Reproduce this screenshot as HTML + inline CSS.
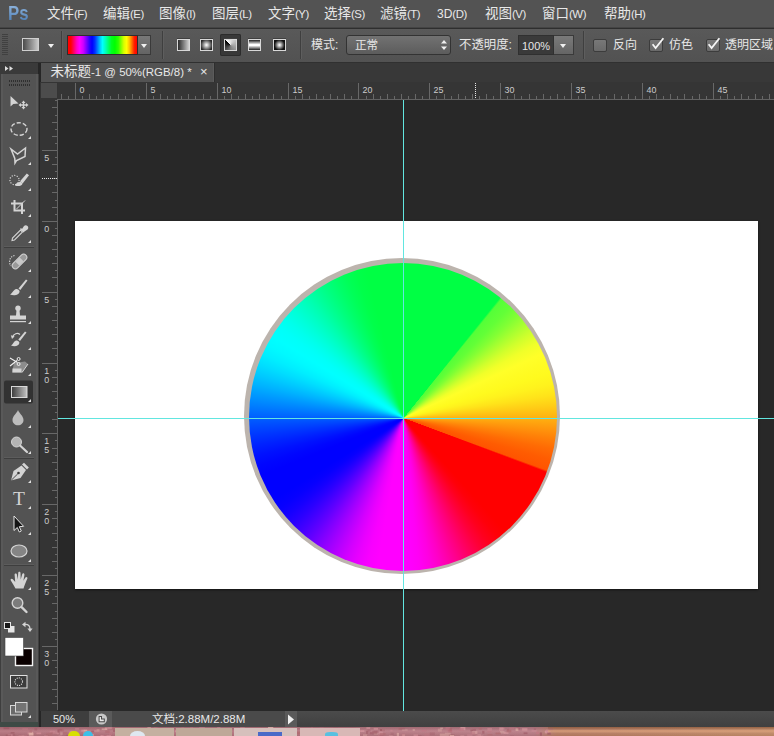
<!DOCTYPE html>
<html lang="zh-CN">
<head>
<meta charset="utf-8">
<title>未标题-1 @ 50%(RGB/8)</title>
<style>
html,body{margin:0;padding:0;}
body{width:774px;height:736px;overflow:hidden;background:#282828;position:relative;
 font-family:"Liberation Sans","Noto Sans CJK SC",sans-serif;color:#dcdcdc;}
.abs{position:absolute;}
#menubar{left:0;top:0;width:774px;height:27px;background:#535353;}
#menubar .mi{position:absolute;top:0;height:27px;line-height:27px;font-size:13.5px;color:#e8e8e8;white-space:nowrap;}
#menubar .l{font-size:11.4px;letter-spacing:-0.45px;position:relative;top:0px;}
#menubar .l3{font-size:12px;}
#pslogo{position:absolute;left:8px;top:0px;height:27px;line-height:25px;font-size:21px;font-weight:bold;color:#6f9ac6;background:linear-gradient(180deg,#8db3dc 20%,#4d7db4 80%);-webkit-background-clip:text;background-clip:text;-webkit-text-fill-color:transparent;letter-spacing:0;transform:scaleX(0.8);transform-origin:0 0;font-family:"Liberation Sans",sans-serif;}
#menuline{left:0;top:27px;width:774px;height:2px;background:linear-gradient(180deg,#444 0,#444 50%,#2e2e2e 50%,#2e2e2e 100%);}
#optbar{left:0;top:29px;width:774px;height:33px;background:linear-gradient(180deg,#595959,#525252);box-sizing:border-box;}
#optline{left:0;top:62px;width:774px;height:1px;background:#303030;}
.olabel{position:absolute;font-size:12px;color:#e6e6e6;white-space:nowrap;line-height:16px;}
#toolhead{left:0;top:63px;width:38px;height:11px;background:#3a3a3a;}
#toolbar{left:0;top:74px;width:38px;height:653px;background:#535353;}
#toolgap{left:38px;top:63px;width:3px;height:664px;background:#262626;}
#tabbar{left:41px;top:63px;width:733px;height:19px;background:#383838;}
#tab{left:41px;top:63px;width:172px;height:19px;background:#535353;box-shadow:1px 0 0 #5c5c5c, 2px 0 0 #2e2e2e;}
#tab span{position:absolute;left:9.5px;top:0;line-height:18px;font-size:13.5px;color:#e8e8e8;white-space:nowrap;}
#tab span i{font-style:normal;font-size:11.45px;}
#tabx{position:absolute;left:159px;top:0;line-height:18px;font-size:13px;color:#e8e8e8;}
#hruler{left:41px;top:82px;width:733px;height:18px;background:#353535;}
#vruler{left:40px;top:82px;width:18px;height:629px;background:#343434;}
#rcorner{left:41px;top:83px;width:16px;height:15px;background:#4c4c4c;}
#work{left:58px;top:100px;width:716px;height:610px;background:#282828;overflow:hidden;}
#doc{left:75px;top:221px;width:683.4px;height:368px;background:#fff;box-shadow:0 1px 2px rgba(0,0,0,.55);}
#ring{left:243.6px;top:258.2px;width:316.4px;height:316.2px;border-radius:50%;background:#bcb4ad;}
#disc{left:248.8px;top:263.4px;width:308px;height:308px;border-radius:50%;
 background:conic-gradient(from 0deg at 154.7px 155.1px,#00ff44 0.0deg,#00ff44 38.6deg,#54ff38 39.4deg,#63ff37 43.7deg,#82ff34 47.9deg,#aaff30 52.2deg,#d1ff2c 56.5deg,#f0ff29 60.7deg,#ffff28 65.0deg,#fffc23 69.0deg,#fffa1e 73.0deg,#fff21d 77.1deg,#ffe31a 81.2deg,#ffcd16 85.3deg,#ffb411 89.4deg,#ff9a0d 93.6deg,#ff8108 97.7deg,#ff6b04 101.8deg,#ff5c01 105.9deg,#ff5400 110.0deg,#ff0000 110.8deg,#ff0000 138.0deg,#ff000a 142.0deg,#ff001e 146.0deg,#ff003a 150.0deg,#ff005c 154.0deg,#ff0080 158.0deg,#ff00a3 162.0deg,#ff00c5 166.0deg,#ff00e1 170.0deg,#ff00f5 174.0deg,#ff00ff 178.0deg,#ff00ff 190.0deg,#f800ff 194.0deg,#e900ff 198.0deg,#d400ff 202.0deg,#ba00ff 206.0deg,#9e00ff 210.0deg,#8000ff 214.0deg,#6100ff 218.0deg,#4500ff 222.0deg,#2b00ff 226.0deg,#1600ff 230.0deg,#0700ff 234.0deg,#0000ff 238.0deg,#0000ff 248.0deg,#0006ff 251.9deg,#0011ff 255.7deg,#0022ff 259.6deg,#0036ff 263.4deg,#004dff 267.3deg,#0066ff 271.1deg,#0080ff 275.0deg,#0099ff 278.9deg,#00b2ff 282.7deg,#00c9ff 286.6deg,#00ddff 290.4deg,#00eeff 294.3deg,#00f9ff 298.1deg,#00ffff 302.0deg,#00fff9 306.0deg,#00ffec 310.0deg,#00ffda 314.0deg,#00ffc5 318.0deg,#00ffae 322.0deg,#00ff95 326.0deg,#00ff7e 330.0deg,#00ff69 334.0deg,#00ff57 338.0deg,#00ff4a 342.0deg,#00ff44 346.0deg,#00ff44 360.0deg);}
#vguide{left:403px;top:100px;width:1px;height:611px;background:#62e6e0;}
#hguide{left:58px;top:418px;width:716px;height:1px;background:#62e6e0;}
#status{left:41px;top:711px;width:733px;height:16px;background:linear-gradient(180deg,#4b4b4b,#404040);}
#statusl{left:41px;top:711px;width:256px;height:16px;background:#4a4a4a;}
#bottomline{left:0;top:722px;width:38px;height:5px;background:#3e4a45;}
#bottom{left:0;top:727px;width:774px;height:9px;background:linear-gradient(180deg,rgba(0,0,0,.12) 0,rgba(255,255,255,.08) 45%,rgba(0,0,0,.06) 100%),linear-gradient(90deg,#b4727c 0,#b87a84 69%,#b87c62 72%,#c48c68 100%);}

#grip1{left:2px;top:34px;width:6px;height:22px;background:repeating-linear-gradient(180deg,#3e3e3e 0,#3e3e3e 1px,transparent 1px,transparent 2px);opacity:.9;}
.vsep{position:absolute;top:31px;width:1px;height:28px;background:#3f3f3f;box-shadow:1px 0 0 #5e5e5e;}
#preset{left:22px;top:38px;width:17px;height:13px;box-sizing:border-box;border:1px solid #cfcfcf;background:linear-gradient(90deg,#4a4a4a,#c8c8c8);}
.tri{position:absolute;width:0;height:0;border-left:3.5px solid transparent;border-right:3.5px solid transparent;border-top:4px solid #f0f0f0;}
#gpick{left:67px;top:35px;width:71px;height:20px;box-sizing:border-box;border:1px solid #2e2e2e;
 background:linear-gradient(90deg,#ff0000 0%,#ff0000 4%,#ff00c8 13%,#ff00ff 17%,#d000ff 22%,#2000ff 32%,#0000ff 35%,#0030ff 39%,#00d0ff 47%,#00ffff 50%,#00ffc0 54%,#00ff20 63%,#00ff00 68%,#30ff00 73%,#d8ff00 81%,#ffff00 85%,#ffc000 89%,#ff2000 96%,#ff0000 100%);}
#gdrop{left:138px;top:35px;width:13px;height:20px;box-sizing:border-box;border:1px solid #3a3a3a;border-left:none;background:linear-gradient(180deg,#787878,#646464);}
.gi{position:absolute;top:39px;width:13px;height:12px;box-sizing:border-box;border:1px solid #d8d8d8;box-shadow:0 -1px 0 #404040;}
#gsel{left:220px;top:34px;width:21px;height:22px;background:#383838;border-radius:2px;box-shadow:inset 0 0 0 1px #2c2c2c;}
#modedd{left:346px;top:35px;width:105px;height:20px;box-sizing:border-box;border:1px solid #333;border-radius:3px;background:linear-gradient(180deg,#727272,#5c5c5c);}
#opin{left:518px;top:35px;width:36px;height:20px;box-sizing:border-box;border:1px solid #303030;background:#3a3a3a;}
#opdd{left:554px;top:35px;width:20px;height:20px;box-sizing:border-box;border:1px solid #3a3a3a;border-left:none;background:linear-gradient(180deg,#7a7a7a,#656565);}
.cb{position:absolute;top:39px;width:14px;height:13px;box-sizing:border-box;border:1px solid #3c3c3c;border-radius:2px;background:linear-gradient(180deg,#787878,#6a6a6a);}
</style>
</head>
<body>
<div id="menubar" class="abs">
 <div id="pslogo">Ps</div>
 <div class="mi" style="left:47px"><span class="c">文件</span><span class="l">(F)</span></div>
 <div class="mi" style="left:103px"><span class="c">编辑</span><span class="l">(E)</span></div>
 <div class="mi" style="left:159px"><span class="c">图像</span><span class="l">(I)</span></div>
 <div class="mi" style="left:212px"><span class="c">图层</span><span class="l">(L)</span></div>
 <div class="mi" style="left:268px"><span class="c">文字</span><span class="l">(Y)</span></div>
 <div class="mi" style="left:324px"><span class="c">选择</span><span class="l">(S)</span></div>
 <div class="mi" style="left:380px"><span class="c">滤镜</span><span class="l">(T)</span></div>
 <div class="mi" style="left:437px"><span class="l3">3D</span><span class="l">(D)</span></div>
 <div class="mi" style="left:485px"><span class="c">视图</span><span class="l">(V)</span></div>
 <div class="mi" style="left:542px"><span class="c">窗口</span><span class="l">(W)</span></div>
 <div class="mi" style="left:604px"><span class="c">帮助</span><span class="l">(H)</span></div>
</div>
<div id="menuline" class="abs"></div>
<div id="optbar" class="abs"></div>
<div id="grip1" class="abs"></div>
<div id="preset" class="abs"></div>
<div class="tri" style="left:48px;top:44px"></div>
<div class="vsep" style="left:61px"></div>
<div id="gpick" class="abs"></div>
<div id="gdrop" class="abs"></div>
<div class="tri" style="left:140.5px;top:44px"></div>
<div class="vsep" style="left:162px"></div>
<div id="gsel" class="abs"></div>
<div class="gi" style="left:177px;background:linear-gradient(90deg,#2a2a2a,#d0d0d0)"></div>
<div class="gi" style="left:200px;background:radial-gradient(circle at 50% 50%,#ffffff 0,#dcdcdc 15%,#2a2a2a 80%)"></div>
<div class="gi" style="left:224px;background:conic-gradient(from 315deg at 50% 50%,#ffffff 0deg,#b8b8b8 110deg,#808080 220deg,#000 360deg)"></div>
<div class="gi" style="left:248px;background:linear-gradient(180deg,#1c1c1c 0,#ffffff 45%,#ffffff 55%,#1c1c1c 100%)"></div>
<div class="gi" style="left:273px;background:radial-gradient(circle at 50% 50%,#ffffff 0,#e0e0e0 12%,#101010 70%)"></div>
<div class="vsep" style="left:300px"></div>
<div class="olabel" style="left:311px;top:37px">模式:</div>
<div id="modedd" class="abs"></div>
<div class="olabel" style="left:355px;top:37px;font-size:11.6px">正常</div>
<svg class="abs" style="left:440px;top:39px" width="8" height="12" viewBox="0 0 8 12"><path d="M1 4.5 L4 1 L7 4.5Z M1 7.5 L4 11 L7 7.5Z" fill="#f0f0f0"/></svg>
<div class="olabel" style="left:459px;top:37px;font-size:12.4px">不透明度:</div>
<div id="opin" class="abs"></div>
<div class="olabel" style="left:522px;top:37.5px;font-size:11px">100%</div>
<div id="opdd" class="abs"></div>
<div class="tri" style="left:560px;top:44px"></div>
<div class="vsep" style="left:583px"></div>
<div class="cb" style="left:593px"></div>
<div class="olabel" style="left:613px;top:37px">反向</div>
<div class="cb" style="left:649px"></div>
<svg class="abs" style="left:651px;top:34px" width="16" height="18" viewBox="0 0 16 18"><path d="M1.6 10.3 L4.6 14 L12.4 4.2" fill="none" stroke="#f6f6f6" stroke-width="1.8"/></svg>
<div class="olabel" style="left:669px;top:37px">仿色</div>
<div class="cb" style="left:705.5px"></div>
<svg class="abs" style="left:707px;top:34px" width="16" height="18" viewBox="0 0 16 18"><path d="M1.6 10.3 L4.6 14 L12.4 4.2" fill="none" stroke="#f6f6f6" stroke-width="1.8"/></svg>
<div class="olabel" style="left:725px;top:37px">透明区域</div>
<div id="optline" class="abs"></div>
<div id="toolhead" class="abs"></div>
<div id="toolbar" class="abs"></div>
<div id="toolgap" class="abs"></div>
<div id="tabbar" class="abs"></div>
<div id="tab" class="abs"><span>未标题<i>-1 @ 50%(RGB/8) *</i></span><b id="tabx" style="font-weight:normal">×</b></div>
<div id="hruler" class="abs"></div>
<div id="vruler" class="abs"></div>
<div id="rcorner" class="abs"></div>
<div id="work" class="abs"></div>
<div id="doc" class="abs"></div>
<div id="ring" class="abs"></div>
<div id="disc" class="abs"></div>
<div id="vguide" class="abs"></div>
<div id="hguide" class="abs"></div>
<div id="status" class="abs"></div>
<div id="statusl" class="abs"></div>
<!--TOOLS-->
<svg id="tools" class="abs" style="left:0;top:63px" width="41" height="664" viewBox="0 63 41 664">
<rect x="0" y="74" width="1" height="653" fill="#3e3e3e"/><rect x="1" y="74" width="2" height="653" fill="#595959"/><rect x="36" y="74" width="2.5" height="653" fill="#595959"/>
<path d="M5 66 L8.5 68.5 L5 71Z M9.5 66 L13 68.5 L9.5 71Z" fill="#dedede"/>
<g stroke="#2f2f2f" stroke-width="1"><path d="M9.5 80 v2 M9.5 84 v2"/><path d="M11.5 80 v2 M11.5 84 v2"/><path d="M13.5 80 v2 M13.5 84 v2"/><path d="M15.5 80 v2 M15.5 84 v2"/><path d="M17.5 80 v2 M17.5 84 v2"/><path d="M19.5 80 v2 M19.5 84 v2"/><path d="M21.5 80 v2 M21.5 84 v2"/><path d="M23.5 80 v2 M23.5 84 v2"/><path d="M25.5 80 v2 M25.5 84 v2"/><path d="M27.5 80 v2 M27.5 84 v2"/><path d="M29.5 80 v2 M29.5 84 v2"/></g>
<rect x="4" y="247" width="30" height="1" fill="#3e3e3e"/><rect x="4" y="246" width="30" height="1" fill="#5c5c5c"/>
<rect x="4" y="458" width="30" height="1" fill="#3e3e3e"/><rect x="4" y="457" width="30" height="1" fill="#5c5c5c"/>
<rect x="4" y="565" width="30" height="1" fill="#3e3e3e"/><rect x="4" y="564" width="30" height="1" fill="#5c5c5c"/>
<path d="M10.5 96 L10.5 106.5 L13.3 104 L18.5 103.5Z" fill="#d4d4d4"/>
<path d="M23.5 100.5 L25.5 103 L24.2 103 L24.2 104.3 L26 104.3 L26 103 L28.5 105 L26 107 L26 105.7 L24.2 105.7 L24.2 107 L25.5 107 L23.5 109.5 L21.5 107 L22.8 107 L22.8 105.7 L21 105.7 L21 107 L18.5 105 L21 103 L21 104.3 L22.8 104.3 L22.8 103 L21.5 103Z" fill="#d4d4d4"/>
<ellipse cx="19" cy="129" rx="8" ry="6.3" fill="none" stroke="#d4d4d4" stroke-width="1.4" stroke-dasharray="4.2 2"/>
<path d="M31 136 L31 139 L28 139Z" fill="#e0e0e0"/>
<path d="M11 149 L17.5 154 L25.5 148 L25 156.5 L16.5 160.5 L15 163 L14.8 158.5Z" fill="none" stroke="#d4d4d4" stroke-width="1.5" stroke-linejoin="miter"/>
<path d="M31 162 L31 165 L28 165Z" fill="#e0e0e0"/>
<circle cx="14.5" cy="180" r="4.6" fill="none" stroke="#d4d4d4" stroke-width="1.2" stroke-dasharray="1.2 1.4"/>
<path d="M29 175.2 L26.8 173.4 L20 181.3 L22.6 183.4Z" fill="#d4d4d4"/><path d="M15 185.5 C16 182.5 19 181.5 21 182 L22.5 183.5 C22 186 18 186.8 15 185.5Z" fill="#d4d4d4"/>
<path d="M31 188 L31 191 L28 191Z" fill="#e0e0e0"/>
<path d="M14.5 200 V210.5 H25 M11 203.5 H22 V214" fill="none" stroke="#d4d4d4" stroke-width="2"/><path d="M16.5 209 L25 200.5" stroke="#d4d4d4" stroke-width="1"/>
<path d="M31 214 L31 217 L28 217Z" fill="#e0e0e0"/>
<path d="M12 240.5 L12.5 238 L20.5 230 L22.5 232 L14.5 240Z" fill="none" stroke="#d4d4d4" stroke-width="1.1"/><path d="M20 229 L23.5 232.5 L24.5 231.5 L27.5 229.5 C28.5 228.5 28.5 227 27.5 226 C26.5 225 25 225 24 226 L22 229 L21 228Z" fill="#d4d4d4"/>
<path d="M31 240 L31 243 L28 243Z" fill="#e0e0e0"/>
<g transform="rotate(-45 19.5 261.5)"><rect x="10.5" y="258.3" width="18" height="6.4" rx="3.2" fill="#9a9a9a" stroke="#d4d4d4" stroke-width="1"/><rect x="16.5" y="258.8" width="6" height="5.4" fill="#c8c8c8"/></g>
<path d="M14.5 255.5 C10 256.5 8.5 261 10.5 266" fill="none" stroke="#d4d4d4" stroke-width="1.2" stroke-dasharray="1.2 1.3"/>
<path d="M31 269 L31 272 L28 272Z" fill="#e0e0e0"/>
<path d="M27.5 280.5 L26 279.5 L18.5 288.5 L20.3 290Z" fill="#d4d4d4"/><path d="M10 294.5 C12.5 293.5 13 290 16 289 C17.5 288.6 19.5 290 19.6 291.5 C19.5 295 14 296.3 10 294.5Z" fill="#d4d4d4"/>
<path d="M31 295 L31 298 L28 298Z" fill="#e0e0e0"/>
<circle cx="18" cy="308.3" r="2.7" fill="#d4d4d4"/><path d="M16.5 310 H19.5 L20 315.5 H26 V319.5 H10 V315.5 H16Z" fill="#d4d4d4"/><rect x="10" y="321" width="16" height="1.2" fill="#d4d4d4"/>
<path d="M31 321 L31 324 L28 324Z" fill="#e0e0e0"/>
<path d="M26.5 332.5 L25 331.5 L18.3 339.5 L20 341Z" fill="#d4d4d4"/><path d="M11 345.5 C13 344.5 13.5 341.5 16 340.5 C17.5 340 19.3 341.3 19.4 342.8 C19.3 346 14.5 347.2 11 345.5Z" fill="#d4d4d4"/><path d="M12.5 337.5 C13.5 333.5 17.5 332.5 20 334.5" fill="none" stroke="#d4d4d4" stroke-width="1.3"/><path d="M10.8 335.2 L14.6 336.2 L12 339Z" fill="#d4d4d4"/>
<path d="M31 347 L31 350 L28 350Z" fill="#e0e0e0"/>
<path d="M14 363 L25 361.5 L28 364 L22 372.5 L12 372.5Z" fill="#8c8c8c"/><path d="M12.5 368.5 H21.5 V372.5 H12.5Z" fill="#d4d4d4"/><path d="M22 372.5 L28 364" stroke="#d4d4d4" stroke-width="1"/>
<path d="M10 358 L17.5 362.5 M10 366 L17 360.5" stroke="#f0f0f0" stroke-width="1.2" fill="none"/><circle cx="18.6" cy="359" r="1.5" fill="none" stroke="#f0f0f0" stroke-width="1"/><circle cx="18.6" cy="364" r="1.5" fill="none" stroke="#f0f0f0" stroke-width="1"/>
<path d="M31 373 L31 376 L28 376Z" fill="#e0e0e0"/>
<rect x="4" y="380.5" width="29" height="23" rx="2" fill="#323232"/>
<defs><linearGradient id="gt" x1="0" y1="0" x2="1" y2="0"><stop offset="0" stop-color="#3a3a3a"/><stop offset="1" stop-color="#c4c4c4"/></linearGradient></defs>
<rect x="11.5" y="386.5" width="15.5" height="11" fill="url(#gt)" stroke="#d8d8d8" stroke-width="1"/>
<path d="M31 399 L31 402 L28 402Z" fill="#e0e0e0"/>
<path d="M18 410 C19 413 23.5 416 23.5 420 C23.5 423.2 21 425.3 18 425.3 C15 425.3 12.5 423.2 12.5 420 C12.5 416 17 413 18 410Z" fill="#bdbdbd"/>
<path d="M31 425 L31 428 L28 428Z" fill="#e0e0e0"/>
<circle cx="16.5" cy="442" r="5" fill="#b4b4b4" stroke="#d4d4d4" stroke-width="1"/><path d="M20.3 445.8 L27 452" stroke="#d4d4d4" stroke-width="2.2" stroke-linecap="round"/>
<path d="M31 451 L31 454 L28 454Z" fill="#e0e0e0"/>
<path d="M11 480.5 L13.5 471 L21.5 465.5 L26 470 L20.5 478Z" fill="#d4d4d4"/><path d="M22 464.5 L24 462.8 L28.8 467.5 L27 469.5Z" fill="#d4d4d4"/><circle cx="18.5" cy="473" r="1.3" fill="#3a3a3a"/><path d="M11.3 480.2 L17.8 473.8" stroke="#3a3a3a" stroke-width="0.9"/>
<path d="M31 480 L31 483 L28 483Z" fill="#e0e0e0"/>
<text x="19" y="505" text-anchor="middle" font-family="Liberation Serif,serif" font-size="19.5" fill="#d4d4d4">T</text>
<path d="M31 506 L31 509 L28 509Z" fill="#e0e0e0"/>
<path d="M14 516 L14 530.5 L17.3 527.5 L19.3 532 L21.3 531 L19.3 526.7 L23.6 526.3Z" fill="#141414" stroke="#e4e4e4" stroke-width="1"/>
<path d="M31 532 L31 535 L28 535Z" fill="#e0e0e0"/>
<ellipse cx="19" cy="551" rx="8" ry="6" fill="#858585" stroke="#d4d4d4" stroke-width="1.2"/>
<path d="M31 559 L31 562 L28 562Z" fill="#e0e0e0"/>
<path d="M15.5 588.5 C14 586 12.5 583 10.8 580.5 C10 579 11.6 578 12.8 579.2 L15.2 582 L14.6 574.8 C14.5 573.2 16.6 573 16.9 574.6 L17.8 579.5 L18.2 573 C18.3 571.4 20.5 571.5 20.5 573.1 L20.7 579.6 L22.2 574.2 C22.7 572.7 24.7 573.3 24.4 574.9 L23.4 580.8 L25.4 577.5 C26.2 576.2 28 577.2 27.3 578.7 C26 581.5 24.5 585 23.5 588.5Z" fill="#d4d4d4"/>
<path d="M31 587 L31 590 L28 590Z" fill="#e0e0e0"/>
<circle cx="17.5" cy="603" r="5.3" fill="#7c7c7c" stroke="#d4d4d4" stroke-width="1.4"/><path d="M21.6 607.2 L26.5 612" stroke="#d4d4d4" stroke-width="2.4" stroke-linecap="round"/>
<rect x="8" y="626" width="6.5" height="6.5" fill="#e6e6e6"/><rect x="4.5" y="622.5" width="6" height="6" fill="#1a1a1a" stroke="#e6e6e6" stroke-width="1"/>
<path d="M24.5 624.5 C28.5 624 30 626 30 629" fill="none" stroke="#d4d4d4" stroke-width="1.3"/><path d="M22 624.5 L25.5 621.8 L25.5 627.2Z M30 632 L27.4 628.5 L32.6 628.5Z" fill="#d4d4d4"/>
<rect x="15.5" y="648.5" width="17" height="17" fill="#0a0000" stroke="#f4f4f4" stroke-width="1.4"/>
<rect x="5" y="637.5" width="18.5" height="18.5" fill="#ffffff" stroke="#444" stroke-width="0.6"/>
<rect x="10.5" y="675.5" width="16.5" height="12.5" fill="#3c3c3c" stroke="#e0e0e0" stroke-width="1"/><circle cx="18.7" cy="681.7" r="3.8" fill="none" stroke="#e8e8e8" stroke-width="1.1" stroke-dasharray="1 1.2"/>
<rect x="10.5" y="705.5" width="11" height="9.5" fill="#6a6a6a" stroke="#d8d8d8" stroke-width="1"/><rect x="15.5" y="702.5" width="11.5" height="9.5" fill="#747474" stroke="#d8d8d8" stroke-width="1"/>
<path d="M31 715 L31 718 L28 718Z" fill="#e0e0e0"/>
</svg>
<!--/TOOLS-->
<!--RULERS-->
<svg id="rulers" class="abs" style="left:41px;top:82px" width="733" height="628" viewBox="41 82 733 628" font-family="Liberation Sans,sans-serif" font-size="8.9" fill="#cccccc">
<path d="M61.5 94V99 M68.5 96V99 M75.5 83V99 M82.5 96V99 M89.5 94V99 M96.5 96V99 M103.5 94V99 M110.5 96V99 M118.5 94V99 M125.5 96V99 M132.5 94V99 M139.5 96V99 M146.5 83V99 M153.5 96V99 M160.5 94V99 M167.5 96V99 M174.5 94V99 M181.5 96V99 M188.5 94V99 M195.5 96V99 M203.5 94V99 M210.5 96V99 M217.5 83V99 M224.5 96V99 M231.5 94V99 M238.5 96V99 M245.5 94V99 M252.5 96V99 M259.5 94V99 M266.5 96V99 M273.5 94V99 M281.5 96V99 M288.5 83V99 M295.5 96V99 M302.5 94V99 M309.5 96V99 M316.5 94V99 M323.5 96V99 M330.5 94V99 M337.5 96V99 M344.5 94V99 M351.5 96V99 M358.5 83V99 M366.5 96V99 M373.5 94V99 M380.5 96V99 M387.5 94V99 M394.5 96V99 M401.5 94V99 M408.5 96V99 M415.5 94V99 M422.5 96V99 M429.5 83V99 M436.5 96V99 M444.5 94V99 M451.5 96V99 M458.5 94V99 M465.5 96V99 M472.5 94V99 M479.5 96V99 M486.5 94V99 M493.5 96V99 M500.5 83V99 M507.5 96V99 M514.5 94V99 M521.5 96V99 M529.5 94V99 M536.5 96V99 M543.5 94V99 M550.5 96V99 M557.5 94V99 M564.5 96V99 M571.5 83V99 M578.5 96V99 M585.5 94V99 M592.5 96V99 M599.5 94V99 M606.5 96V99 M614.5 94V99 M621.5 96V99 M628.5 94V99 M635.5 96V99 M642.5 83V99 M649.5 96V99 M656.5 94V99 M663.5 96V99 M670.5 94V99 M677.5 96V99 M684.5 94V99 M692.5 96V99 M699.5 94V99 M706.5 96V99 M713.5 83V99 M720.5 96V99 M727.5 94V99 M734.5 96V99 M741.5 94V99 M748.5 96V99 M755.5 94V99 M762.5 96V99 M769.5 94V99" stroke="#686868" stroke-width="1" fill="none"/>
<text x="79.5" y="93.2">0</text>
<text x="150.5" y="93.2">5</text>
<text x="221.5" y="93.2">10</text>
<text x="292.5" y="93.2">15</text>
<text x="362.5" y="93.2">20</text>
<text x="433.5" y="93.2">25</text>
<text x="504.5" y="93.2">30</text>
<text x="575.5" y="93.2">35</text>
<text x="646.5" y="93.2">40</text>
<text x="717.5" y="93.2">45</text>
<path d="M55 100.5H58 M52 107.5H58 M55 115.5H58 M52 122.5H58 M55 129.5H58 M52 136.5H58 M55 143.5H58 M42 150.5H58 M55 157.5H58 M52 164.5H58 M55 171.5H58 M52 178.5H58 M55 185.5H58 M52 192.5H58 M55 200.5H58 M52 207.5H58 M55 214.5H58 M42 221.5H58 M55 228.5H58 M52 235.5H58 M55 242.5H58 M52 249.5H58 M55 256.5H58 M52 263.5H58 M55 270.5H58 M52 277.5H58 M55 285.5H58 M42 292.5H58 M55 299.5H58 M52 306.5H58 M55 313.5H58 M52 320.5H58 M55 327.5H58 M52 334.5H58 M55 341.5H58 M52 348.5H58 M55 355.5H58 M42 363.5H58 M55 370.5H58 M52 377.5H58 M55 384.5H58 M52 391.5H58 M55 398.5H58 M52 405.5H58 M55 412.5H58 M52 419.5H58 M55 426.5H58 M42 433.5H58 M55 440.5H58 M52 448.5H58 M55 455.5H58 M52 462.5H58 M55 469.5H58 M52 476.5H58 M55 483.5H58 M52 490.5H58 M55 497.5H58 M42 504.5H58 M55 511.5H58 M52 518.5H58 M55 526.5H58 M52 533.5H58 M55 540.5H58 M52 547.5H58 M55 554.5H58 M52 561.5H58 M55 568.5H58 M42 575.5H58 M55 582.5H58 M52 589.5H58 M55 596.5H58 M52 603.5H58 M55 611.5H58 M52 618.5H58 M55 625.5H58 M52 632.5H58 M55 639.5H58 M42 646.5H58 M55 653.5H58 M52 660.5H58 M55 667.5H58 M52 674.5H58 M55 681.5H58 M52 689.5H58 M55 696.5H58 M52 703.5H58" stroke="#686868" stroke-width="1" fill="none"/>
<text x="44.3" y="160.5">5</text>
<text x="44.3" y="231.5">0</text>
<text x="44.3" y="302.5">5</text>
<text x="44.3" y="373.5">1</text>
<text x="44.3" y="382.5">0</text>
<text x="44.3" y="443.5">1</text>
<text x="44.3" y="452.5">5</text>
<text x="44.3" y="514.5">2</text>
<text x="44.3" y="523.5">0</text>
<text x="44.3" y="585.5">2</text>
<text x="44.3" y="594.5">5</text>
<text x="44.3" y="656.5">3</text>
<text x="44.3" y="665.5">0</text>
<path d="M58 99.5H774 M57.5 99V710" stroke="#626262" stroke-width="1" fill="none"/>
<path d="M475.5 83V99" stroke="#e8e8e8" stroke-width="1" stroke-dasharray="1 1" fill="none"/>
<path d="M42 178.5H58" stroke="#e8e8e8" stroke-width="1" stroke-dasharray="1 1" fill="none"/>
</svg>
<!--/RULERS-->
<!--STATUS-->
<div id="st1" class="abs" style="left:41px;top:711px;width:48px;height:16px;background:#3e3e3e"></div>
<div class="abs st" style="left:53px;top:711px;line-height:16px;font-size:11px;color:#e8e8e8">50%</div>
<div id="st2" class="abs" style="left:89px;top:711px;width:23px;height:16px;background:#5a5a5a"></div>
<svg class="abs" style="left:95px;top:712px" width="13" height="14" viewBox="0 0 13 14"><circle cx="6.5" cy="7" r="5.6" fill="#c8c8c8"/><path d="M3.6 4 H7 V6.6 H9.8 V10.3 H3.6Z" fill="#4a4a4a"/><path d="M4.6 5 H6 V7.6 H8.8 V9.3 H4.6Z" fill="#e8e8e8"/></svg>
<div id="st3" class="abs" style="left:112px;top:711px;width:173px;height:16px;background:#4a4a4a"></div>
<div class="abs st" style="left:152px;top:711px;line-height:16px;font-size:11.5px;color:#e8e8e8;white-space:nowrap">文档:2.88M/2.88M</div>
<div id="st4" class="abs" style="left:285px;top:711px;width:12px;height:16px;background:#5a5a5a"></div>
<svg class="abs" style="left:287px;top:714px" width="8" height="11" viewBox="0 0 8 11"><path d="M1 0.5 L7 5.5 L1 10.5Z" fill="#f0f0f0"/></svg>

<!--/STATUS-->
<div id="bottomline" class="abs"></div>
<div id="bottom" class="abs"></div>
<svg class="abs" style="left:0;top:727px" width="774" height="9" viewBox="0 0 774 9"><rect x="177.5" y="1.4" width="4.6" height="1.6" fill="#e0b0a8" opacity="0.39"/><rect x="319.4" y="8.2" width="2.9" height="1.7" fill="#a4606c" opacity="0.38"/><rect x="49.7" y="3.8" width="5.3" height="1.7" fill="#cf8c96" opacity="0.63"/><rect x="319.5" y="0.6" width="4.3" height="1.6" fill="#cf8c96" opacity="0.37"/><rect x="470.4" y="2.6" width="2.6" height="1.7" fill="#9c5862" opacity="0.60"/><rect x="373.7" y="0.9" width="4.3" height="1.9" fill="#d89aa0" opacity="0.60"/><rect x="34.4" y="0.5" width="2.8" height="2.9" fill="#a4606c" opacity="0.70"/><rect x="255.1" y="8.3" width="3.4" height="2.0" fill="#cf8c96" opacity="0.66"/><rect x="133.8" y="5.2" width="4.1" height="3.3" fill="#c07884" opacity="0.55"/><rect x="333.7" y="0.7" width="4.0" height="1.8" fill="#9c5862" opacity="0.42"/><rect x="268.0" y="0.4" width="4.7" height="3.0" fill="#e0b0a8" opacity="0.71"/><rect x="448.5" y="3.1" width="3.4" height="2.5" fill="#b06a70" opacity="0.56"/><rect x="460.3" y="8.5" width="3.9" height="2.8" fill="#d89aa0" opacity="0.68"/><rect x="169.7" y="5.2" width="4.7" height="2.4" fill="#c07884" opacity="0.52"/><rect x="366.4" y="0.2" width="3.8" height="1.8" fill="#d89aa0" opacity="0.57"/><rect x="119.6" y="2.6" width="5.0" height="2.3" fill="#b06a70" opacity="0.57"/><rect x="91.2" y="3.6" width="3.1" height="1.8" fill="#a4606c" opacity="0.74"/><rect x="152.6" y="3.7" width="3.4" height="3.3" fill="#cf8c96" opacity="0.42"/><rect x="96.6" y="2.1" width="2.9" height="2.5" fill="#e0b0a8" opacity="0.43"/><rect x="154.5" y="1.3" width="4.1" height="2.7" fill="#9c5862" opacity="0.78"/><rect x="378.4" y="4.6" width="4.5" height="2.9" fill="#d89aa0" opacity="0.56"/><rect x="477.3" y="8.6" width="4.7" height="2.6" fill="#a4606c" opacity="0.53"/><rect x="56.7" y="5.7" width="2.2" height="1.6" fill="#cf8c96" opacity="0.55"/><rect x="60.2" y="5.4" width="2.4" height="2.6" fill="#e0b0a8" opacity="0.40"/><rect x="199.3" y="0.2" width="5.5" height="2.7" fill="#cf8c96" opacity="0.64"/><rect x="523.6" y="5.4" width="3.9" height="1.7" fill="#a4606c" opacity="0.80"/><rect x="255.4" y="4.4" width="2.3" height="1.7" fill="#9c5862" opacity="0.68"/><rect x="262.3" y="6.2" width="4.1" height="1.9" fill="#e0b0a8" opacity="0.51"/><rect x="378.2" y="8.2" width="5.0" height="2.1" fill="#c07884" opacity="0.74"/><rect x="381.5" y="2.4" width="3.5" height="1.8" fill="#b06a70" opacity="0.45"/><rect x="296.8" y="4.5" width="4.5" height="2.7" fill="#b06a70" opacity="0.79"/><rect x="467.2" y="7.3" width="5.3" height="3.0" fill="#cf8c96" opacity="0.44"/><rect x="270.0" y="6.6" width="6.0" height="3.1" fill="#a4606c" opacity="0.47"/><rect x="379.5" y="8.6" width="3.8" height="3.4" fill="#9c5862" opacity="0.78"/><rect x="199.8" y="2.0" width="2.9" height="1.9" fill="#cf8c96" opacity="0.57"/><rect x="539.9" y="5.5" width="2.0" height="3.3" fill="#9c5862" opacity="0.71"/><rect x="46.5" y="5.9" width="5.6" height="3.1" fill="#b06a70" opacity="0.44"/><rect x="487.2" y="3.9" width="4.5" height="1.7" fill="#c07884" opacity="0.53"/><rect x="220.0" y="8.5" width="4.9" height="1.8" fill="#cf8c96" opacity="0.36"/><rect x="323.8" y="4.2" width="4.6" height="2.7" fill="#e0b0a8" opacity="0.79"/><rect x="360.2" y="3.2" width="4.2" height="1.8" fill="#d89aa0" opacity="0.71"/><rect x="398.1" y="0.9" width="5.0" height="1.8" fill="#b06a70" opacity="0.44"/><rect x="478.9" y="0.3" width="2.9" height="2.5" fill="#b06a70" opacity="0.61"/><rect x="142.1" y="3.8" width="2.5" height="3.3" fill="#9c5862" opacity="0.75"/><rect x="363.0" y="7.3" width="4.1" height="3.2" fill="#e0b0a8" opacity="0.41"/><rect x="83.2" y="4.6" width="5.5" height="3.1" fill="#e0b0a8" opacity="0.35"/><rect x="437.9" y="1.6" width="3.9" height="3.0" fill="#e0b0a8" opacity="0.38"/><rect x="373.9" y="4.8" width="3.9" height="3.1" fill="#e0b0a8" opacity="0.38"/><rect x="104.8" y="0.4" width="2.4" height="2.4" fill="#d89aa0" opacity="0.69"/><rect x="500.0" y="4.0" width="4.5" height="2.5" fill="#e0b0a8" opacity="0.44"/><rect x="151.9" y="4.6" width="5.2" height="2.5" fill="#cf8c96" opacity="0.66"/><rect x="480.3" y="8.5" width="3.0" height="2.6" fill="#cf8c96" opacity="0.73"/><rect x="75.1" y="1.1" width="3.8" height="1.6" fill="#cf8c96" opacity="0.54"/><rect x="116.6" y="2.7" width="2.5" height="3.1" fill="#c07884" opacity="0.64"/><rect x="200.7" y="2.3" width="2.5" height="2.4" fill="#c07884" opacity="0.78"/><rect x="218.2" y="4.4" width="6.0" height="3.2" fill="#cf8c96" opacity="0.67"/><rect x="544.8" y="3.6" width="3.7" height="2.2" fill="#d89aa0" opacity="0.67"/><rect x="10.7" y="5.0" width="3.8" height="1.5" fill="#9c5862" opacity="0.58"/><rect x="161.9" y="8.6" width="2.5" height="3.3" fill="#cf8c96" opacity="0.79"/><rect x="57.4" y="2.4" width="2.2" height="3.1" fill="#9c5862" opacity="0.69"/><rect x="449.2" y="7.6" width="4.7" height="3.4" fill="#a4606c" opacity="0.42"/><rect x="503.7" y="5.1" width="4.8" height="1.7" fill="#d89aa0" opacity="0.71"/><rect x="100.5" y="8.1" width="3.1" height="1.5" fill="#d89aa0" opacity="0.71"/><rect x="45.9" y="7.7" width="2.3" height="3.2" fill="#a4606c" opacity="0.36"/><rect x="544.9" y="3.8" width="5.7" height="2.7" fill="#d89aa0" opacity="0.59"/><rect x="130.7" y="1.0" width="2.6" height="1.6" fill="#cf8c96" opacity="0.77"/><rect x="344.5" y="4.8" width="2.8" height="2.4" fill="#c07884" opacity="0.43"/><rect x="190.2" y="0.2" width="3.0" height="1.5" fill="#c07884" opacity="0.58"/><rect x="536.0" y="4.6" width="3.0" height="2.4" fill="#c07884" opacity="0.72"/><rect x="236.8" y="4.5" width="5.3" height="2.3" fill="#e0b0a8" opacity="0.49"/><rect x="117.9" y="2.1" width="2.8" height="3.3" fill="#c07884" opacity="0.64"/><rect x="221.8" y="3.1" width="2.2" height="1.8" fill="#d89aa0" opacity="0.63"/><rect x="482.2" y="3.9" width="2.2" height="2.8" fill="#a4606c" opacity="0.74"/><rect x="367.5" y="2.5" width="3.0" height="2.1" fill="#a4606c" opacity="0.43"/><rect x="147.4" y="0.0" width="3.5" height="2.2" fill="#e0b0a8" opacity="0.50"/><rect x="18.9" y="7.9" width="2.9" height="1.9" fill="#9c5862" opacity="0.52"/><rect x="260.1" y="4.5" width="2.8" height="2.5" fill="#d89aa0" opacity="0.39"/><rect x="447.7" y="1.3" width="4.3" height="2.3" fill="#9c5862" opacity="0.49"/><rect x="127.6" y="5.3" width="4.1" height="3.0" fill="#c07884" opacity="0.75"/><rect x="429.7" y="5.4" width="5.1" height="2.9" fill="#a4606c" opacity="0.42"/><rect x="396.8" y="5.8" width="2.2" height="3.2" fill="#e0b0a8" opacity="0.63"/><rect x="402.2" y="7.3" width="2.6" height="2.5" fill="#e0b0a8" opacity="0.61"/><rect x="445.5" y="0.1" width="4.7" height="3.1" fill="#c07884" opacity="0.66"/><rect x="379.9" y="2.1" width="2.1" height="1.8" fill="#9c5862" opacity="0.78"/><rect x="206.4" y="4.1" width="2.2" height="1.5" fill="#e0b0a8" opacity="0.66"/><rect x="268.1" y="0.0" width="5.2" height="3.0" fill="#e0b0a8" opacity="0.75"/><rect x="50.4" y="4.7" width="5.0" height="2.4" fill="#b06a70" opacity="0.38"/><rect x="145.5" y="6.6" width="2.8" height="3.0" fill="#a4606c" opacity="0.57"/><rect x="209.6" y="4.3" width="4.7" height="3.0" fill="#e0b0a8" opacity="0.63"/><rect x="108.7" y="5.4" width="3.3" height="2.8" fill="#c07884" opacity="0.49"/><rect x="311.1" y="0.1" width="2.2" height="2.0" fill="#c07884" opacity="0.39"/><rect x="119.3" y="4.4" width="4.8" height="2.1" fill="#a4606c" opacity="0.56"/><rect x="64.9" y="8.0" width="2.8" height="3.5" fill="#a4606c" opacity="0.36"/><rect x="251.5" y="7.4" width="5.9" height="2.4" fill="#9c5862" opacity="0.52"/><rect x="502.3" y="8.4" width="2.3" height="1.7" fill="#c07884" opacity="0.59"/><rect x="522.1" y="1.2" width="5.3" height="2.5" fill="#d89aa0" opacity="0.67"/><rect x="126.8" y="8.1" width="3.9" height="1.5" fill="#d89aa0" opacity="0.78"/><rect x="373.5" y="3.6" width="4.9" height="2.3" fill="#a4606c" opacity="0.49"/><rect x="460.4" y="0.0" width="5.0" height="3.2" fill="#d89aa0" opacity="0.77"/><rect x="107.3" y="0.1" width="5.0" height="2.0" fill="#d89aa0" opacity="0.53"/><rect x="547.3" y="5.3" width="3.4" height="2.4" fill="#9c5862" opacity="0.73"/><rect x="153.8" y="0.5" width="4.6" height="2.8" fill="#cf8c96" opacity="0.46"/><rect x="145.6" y="4.6" width="2.8" height="2.2" fill="#a4606c" opacity="0.75"/><rect x="445.0" y="5.7" width="5.7" height="3.4" fill="#e0b0a8" opacity="0.44"/><rect x="44.2" y="8.4" width="3.6" height="2.7" fill="#cf8c96" opacity="0.64"/><rect x="156.8" y="0.4" width="5.7" height="1.8" fill="#a4606c" opacity="0.54"/><rect x="154.4" y="2.3" width="5.0" height="2.8" fill="#a4606c" opacity="0.65"/><rect x="164.9" y="5.0" width="3.6" height="1.8" fill="#cf8c96" opacity="0.38"/><rect x="274.3" y="7.3" width="4.2" height="2.4" fill="#9c5862" opacity="0.80"/><rect x="246.6" y="1.3" width="2.8" height="1.7" fill="#9c5862" opacity="0.60"/><rect x="175.0" y="3.3" width="5.2" height="1.9" fill="#d89aa0" opacity="0.69"/><rect x="226.2" y="3.7" width="4.1" height="2.3" fill="#9c5862" opacity="0.69"/><rect x="273.0" y="5.2" width="3.4" height="2.9" fill="#e0b0a8" opacity="0.63"/><rect x="472.8" y="1.9" width="3.1" height="2.0" fill="#a4606c" opacity="0.64"/><rect x="236.6" y="2.8" width="5.3" height="3.4" fill="#cf8c96" opacity="0.36"/><rect x="388.8" y="8.1" width="3.9" height="2.7" fill="#d89aa0" opacity="0.38"/><rect x="509.8" y="8.4" width="4.1" height="2.4" fill="#a4606c" opacity="0.46"/><rect x="59.8" y="1.4" width="4.1" height="2.9" fill="#b06a70" opacity="0.67"/><rect x="354.7" y="6.9" width="3.8" height="2.6" fill="#d89aa0" opacity="0.35"/><rect x="68.9" y="5.1" width="2.2" height="2.9" fill="#cf8c96" opacity="0.63"/><rect x="289.5" y="3.9" width="5.1" height="1.7" fill="#9c5862" opacity="0.59"/><rect x="319.4" y="3.5" width="2.9" height="2.7" fill="#d89aa0" opacity="0.59"/><rect x="546.0" y="2.5" width="3.3" height="3.2" fill="#cf8c96" opacity="0.56"/><rect x="128.7" y="2.2" width="5.8" height="2.9" fill="#9c5862" opacity="0.37"/><rect x="106.4" y="8.0" width="4.6" height="1.7" fill="#cf8c96" opacity="0.65"/><rect x="507.0" y="2.0" width="2.1" height="2.2" fill="#a4606c" opacity="0.51"/><rect x="217.2" y="0.1" width="3.2" height="3.2" fill="#d89aa0" opacity="0.44"/><rect x="531.5" y="2.8" width="5.3" height="2.0" fill="#cf8c96" opacity="0.47"/><rect x="487.4" y="1.0" width="4.5" height="2.7" fill="#cf8c96" opacity="0.57"/><rect x="498.9" y="0.5" width="4.4" height="3.3" fill="#d89aa0" opacity="0.45"/><rect x="533.8" y="1.3" width="2.2" height="1.6" fill="#a4606c" opacity="0.55"/><rect x="390.2" y="2.8" width="2.5" height="1.7" fill="#cf8c96" opacity="0.50"/><rect x="101.7" y="8.4" width="5.0" height="1.6" fill="#c07884" opacity="0.68"/><rect x="459.8" y="8.9" width="3.8" height="1.7" fill="#d89aa0" opacity="0.48"/><rect x="192.6" y="8.6" width="2.5" height="3.4" fill="#cf8c96" opacity="0.52"/><rect x="421.3" y="2.8" width="5.2" height="1.7" fill="#c07884" opacity="0.56"/><rect x="204.2" y="8.3" width="2.8" height="2.2" fill="#a4606c" opacity="0.36"/><rect x="225.1" y="7.3" width="5.1" height="1.6" fill="#d89aa0" opacity="0.56"/><rect x="440.2" y="0.6" width="2.8" height="1.6" fill="#e0b0a8" opacity="0.50"/><rect x="149.2" y="8.6" width="4.5" height="2.0" fill="#c07884" opacity="0.66"/><rect x="506.5" y="2.7" width="4.9" height="2.7" fill="#b06a70" opacity="0.64"/><rect x="516.9" y="0.2" width="2.9" height="2.5" fill="#a4606c" opacity="0.78"/><rect x="211.8" y="2.3" width="3.7" height="2.5" fill="#a4606c" opacity="0.43"/><rect x="439.8" y="6.6" width="5.3" height="3.0" fill="#e0b0a8" opacity="0.46"/><rect x="472.0" y="4.1" width="5.1" height="2.7" fill="#e0b0a8" opacity="0.44"/><rect x="412.6" y="2.2" width="2.3" height="1.6" fill="#e0b0a8" opacity="0.60"/><rect x="88.1" y="3.8" width="2.4" height="1.6" fill="#e0b0a8" opacity="0.39"/><rect x="52.8" y="4.5" width="4.8" height="2.4" fill="#cf8c96" opacity="0.41"/><rect x="252.6" y="8.0" width="2.9" height="2.6" fill="#b06a70" opacity="0.65"/><rect x="66.4" y="7.6" width="3.2" height="2.6" fill="#9c5862" opacity="0.46"/><rect x="142.7" y="4.0" width="2.7" height="2.0" fill="#9c5862" opacity="0.75"/><rect x="316.9" y="2.9" width="3.6" height="3.5" fill="#e0b0a8" opacity="0.59"/><rect x="356.0" y="0.9" width="3.9" height="1.6" fill="#d89aa0" opacity="0.56"/><rect x="448.9" y="7.6" width="5.7" height="1.6" fill="#9c5862" opacity="0.45"/><rect x="27.6" y="5.4" width="5.3" height="1.9" fill="#d89aa0" opacity="0.52"/><rect x="474.6" y="4.0" width="3.0" height="3.1" fill="#d89aa0" opacity="0.40"/><rect x="326.7" y="5.6" width="2.9" height="2.2" fill="#cf8c96" opacity="0.37"/><rect x="547.9" y="0.3" width="4.9" height="3.3" fill="#b06a70" opacity="0.36"/><rect x="179.3" y="6.1" width="2.7" height="2.1" fill="#cf8c96" opacity="0.36"/><rect x="271.6" y="4.4" width="3.6" height="3.1" fill="#c07884" opacity="0.60"/><rect x="350.3" y="0.8" width="2.7" height="2.9" fill="#a4606c" opacity="0.79"/><rect x="366.0" y="3.8" width="2.2" height="3.0" fill="#9c5862" opacity="0.54"/><rect x="10.0" y="6.9" width="5.2" height="2.8" fill="#a4606c" opacity="0.68"/><rect x="111.6" y="0.1" width="5.6" height="2.3" fill="#b06a70" opacity="0.39"/><rect x="316.6" y="3.3" width="5.1" height="1.8" fill="#d89aa0" opacity="0.60"/><rect x="351.1" y="8.2" width="2.4" height="2.7" fill="#9c5862" opacity="0.68"/><rect x="94.1" y="3.1" width="2.6" height="1.8" fill="#d89aa0" opacity="0.40"/><rect x="268.8" y="7.2" width="5.9" height="1.9" fill="#cf8c96" opacity="0.73"/><rect x="23.8" y="8.2" width="3.3" height="2.7" fill="#c07884" opacity="0.52"/><rect x="495.5" y="5.6" width="5.3" height="1.8" fill="#b06a70" opacity="0.74"/><rect x="340.3" y="5.5" width="2.8" height="2.4" fill="#e0b0a8" opacity="0.45"/><rect x="219.1" y="4.7" width="3.5" height="1.7" fill="#cf8c96" opacity="0.79"/><rect x="447.0" y="1.7" width="5.5" height="3.2" fill="#c07884" opacity="0.37"/><rect x="459.3" y="1.1" width="4.4" height="2.6" fill="#c07884" opacity="0.70"/><rect x="355.7" y="2.8" width="3.0" height="2.3" fill="#9c5862" opacity="0.55"/><rect x="240.2" y="0.2" width="4.5" height="2.5" fill="#cf8c96" opacity="0.55"/><rect x="339.0" y="7.4" width="5.3" height="3.1" fill="#a4606c" opacity="0.40"/><rect x="70.4" y="3.9" width="2.4" height="2.4" fill="#e0b0a8" opacity="0.65"/><rect x="22.3" y="1.2" width="5.7" height="2.1" fill="#c07884" opacity="0.58"/><rect x="29.7" y="4.5" width="3.5" height="3.4" fill="#cf8c96" opacity="0.36"/><rect x="36.4" y="5.5" width="4.8" height="1.7" fill="#cf8c96" opacity="0.79"/><rect x="269.5" y="8.6" width="5.7" height="1.8" fill="#b06a70" opacity="0.67"/><rect x="121.2" y="7.5" width="4.4" height="2.0" fill="#9c5862" opacity="0.75"/><rect x="150.7" y="7.3" width="2.6" height="2.5" fill="#a4606c" opacity="0.44"/><rect x="144.1" y="4.6" width="3.3" height="1.6" fill="#cf8c96" opacity="0.53"/><rect x="348.8" y="2.5" width="3.3" height="2.3" fill="#b06a70" opacity="0.70"/><rect x="63.1" y="4.8" width="4.5" height="2.2" fill="#b06a70" opacity="0.55"/><rect x="285.8" y="6.2" width="5.6" height="2.0" fill="#e0b0a8" opacity="0.63"/><rect x="216.1" y="7.2" width="3.1" height="3.5" fill="#e0b0a8" opacity="0.42"/><rect x="181.3" y="0.7" width="2.9" height="2.7" fill="#d89aa0" opacity="0.48"/><rect x="282.8" y="2.8" width="5.9" height="3.2" fill="#c07884" opacity="0.75"/><rect x="401.7" y="6.7" width="2.9" height="2.1" fill="#c07884" opacity="0.54"/><rect x="280.9" y="8.1" width="2.5" height="2.0" fill="#c07884" opacity="0.37"/><rect x="29.8" y="5.1" width="3.2" height="2.5" fill="#e0b0a8" opacity="0.45"/><rect x="319.8" y="5.3" width="2.8" height="2.7" fill="#a4606c" opacity="0.42"/><rect x="7.7" y="7.2" width="4.8" height="2.4" fill="#d89aa0" opacity="0.64"/><rect x="477.5" y="7.0" width="3.6" height="2.0" fill="#d89aa0" opacity="0.38"/><rect x="449.8" y="8.0" width="4.4" height="2.7" fill="#e0b0a8" opacity="0.77"/><rect x="402.0" y="2.2" width="5.6" height="1.6" fill="#e0b0a8" opacity="0.36"/><rect x="101.7" y="1.4" width="5.6" height="1.7" fill="#e0b0a8" opacity="0.60"/><rect x="515.6" y="1.3" width="2.8" height="2.7" fill="#e0b0a8" opacity="0.64"/><rect x="227.6" y="5.5" width="4.0" height="1.6" fill="#c07884" opacity="0.37"/><rect x="487.4" y="7.0" width="4.9" height="1.5" fill="#b06a70" opacity="0.55"/><rect x="499.9" y="0.7" width="4.6" height="1.9" fill="#d89aa0" opacity="0.47"/><rect x="352.9" y="1.1" width="5.6" height="3.4" fill="#b06a70" opacity="0.47"/><rect x="28.8" y="5.7" width="4.7" height="2.9" fill="#e0b0a8" opacity="0.79"/><rect x="162.0" y="8.4" width="5.6" height="1.7" fill="#e0b0a8" opacity="0.36"/><rect x="142.7" y="2.1" width="5.0" height="3.4" fill="#c07884" opacity="0.76"/><rect x="105.2" y="3.5" width="4.4" height="2.3" fill="#b06a70" opacity="0.63"/><rect x="379.7" y="6.0" width="5.9" height="2.4" fill="#b06a70" opacity="0.59"/><rect x="3.5" y="0.2" width="5.8" height="2.0" fill="#9c5862" opacity="0.71"/><rect x="214.6" y="5.3" width="4.3" height="1.8" fill="#d89aa0" opacity="0.36"/><rect x="58.5" y="8.4" width="3.4" height="1.8" fill="#d89aa0" opacity="0.36"/><rect x="75.8" y="5.8" width="2.2" height="1.6" fill="#d89aa0" opacity="0.38"/><rect x="323.6" y="3.3" width="5.3" height="3.1" fill="#c07884" opacity="0.38"/><rect x="475.6" y="8.2" width="5.8" height="1.7" fill="#cf8c96" opacity="0.44"/><rect x="18.6" y="8.5" width="5.6" height="3.0" fill="#d89aa0" opacity="0.72"/><rect x="346.1" y="2.6" width="2.4" height="1.7" fill="#b06a70" opacity="0.64"/><rect x="161.4" y="3.0" width="3.0" height="2.2" fill="#9c5862" opacity="0.37"/><rect x="416.4" y="8.2" width="5.1" height="2.7" fill="#a4606c" opacity="0.73"/><rect x="338.8" y="0.3" width="3.7" height="2.4" fill="#b06a70" opacity="0.39"/><rect x="257.0" y="0.4" width="4.3" height="2.9" fill="#b06a70" opacity="0.39"/><rect x="449.3" y="1.5" width="2.0" height="1.9" fill="#b06a70" opacity="0.69"/><rect x="29.6" y="3.1" width="2.4" height="2.9" fill="#b06a70" opacity="0.43"/><rect x="271.0" y="3.1" width="5.3" height="2.0" fill="#cf8c96" opacity="0.48"/><rect x="117.7" y="6.3" width="4.0" height="1.7" fill="#c07884" opacity="0.70"/><rect x="268.7" y="8.9" width="4.2" height="1.7" fill="#9c5862" opacity="0.51"/><rect x="219.9" y="3.6" width="5.6" height="1.7" fill="#c07884" opacity="0.36"/><rect x="113.0" y="2.4" width="5.6" height="2.5" fill="#a4606c" opacity="0.79"/><rect x="345.6" y="8.5" width="2.5" height="2.7" fill="#c07884" opacity="0.69"/><rect x="354.2" y="3.1" width="3.3" height="1.8" fill="#b06a70" opacity="0.55"/><rect x="303.4" y="2.9" width="3.9" height="2.9" fill="#9c5862" opacity="0.61"/><rect x="69.1" y="4.2" width="5.5" height="2.0" fill="#cf8c96" opacity="0.47"/><rect x="413.6" y="7.4" width="4.5" height="2.9" fill="#cf8c96" opacity="0.68"/><rect x="330.4" y="3.1" width="2.9" height="3.4" fill="#9c5862" opacity="0.79"/><rect x="399.3" y="0.9" width="5.8" height="1.7" fill="#a4606c" opacity="0.42"/><rect x="81.3" y="2.7" width="3.2" height="2.0" fill="#d89aa0" opacity="0.64"/><rect x="58.6" y="1.9" width="3.6" height="1.6" fill="#a4606c" opacity="0.73"/><rect x="239.2" y="2.0" width="5.9" height="2.1" fill="#d89aa0" opacity="0.41"/><rect x="330.8" y="3.6" width="5.0" height="3.3" fill="#a4606c" opacity="0.67"/><rect x="321.9" y="5.8" width="5.4" height="2.8" fill="#c07884" opacity="0.75"/><rect x="424.2" y="6.3" width="5.4" height="2.9" fill="#c07884" opacity="0.41"/><rect x="237.0" y="2.3" width="4.8" height="3.3" fill="#cf8c96" opacity="0.70"/><rect x="390.8" y="5.7" width="3.0" height="2.3" fill="#a4606c" opacity="0.36"/><rect x="470.5" y="4.7" width="4.6" height="3.2" fill="#c07884" opacity="0.50"/><rect x="5.8" y="7.5" width="5.6" height="1.7" fill="#9c5862" opacity="0.59"/><rect x="88.1" y="7.0" width="5.8" height="2.5" fill="#d89aa0" opacity="0.73"/><rect x="250.3" y="1.8" width="3.9" height="1.5" fill="#b06a70" opacity="0.72"/><rect x="285.9" y="3.7" width="5.8" height="1.9" fill="#c07884" opacity="0.43"/><rect x="281.6" y="8.4" width="4.9" height="2.7" fill="#c07884" opacity="0.38"/><rect x="150.3" y="3.6" width="2.1" height="2.3" fill="#a4606c" opacity="0.63"/><rect x="369.8" y="5.2" width="2.4" height="2.1" fill="#a4606c" opacity="0.77"/><rect x="288.8" y="2.0" width="5.2" height="2.3" fill="#cf8c96" opacity="0.42"/><rect x="509.3" y="0.6" width="5.2" height="1.9" fill="#c07884" opacity="0.60"/><rect x="123.8" y="8.7" width="3.4" height="2.8" fill="#b06a70" opacity="0.71"/><rect x="226.5" y="9.0" width="5.0" height="2.8" fill="#b06a70" opacity="0.73"/><rect x="194.4" y="7.7" width="3.1" height="2.3" fill="#9c5862" opacity="0.79"/><rect x="372.0" y="4.3" width="5.2" height="3.1" fill="#9c5862" opacity="0.46"/><rect x="165.4" y="4.3" width="3.7" height="2.8" fill="#c07884" opacity="0.75"/><rect x="83.7" y="2.7" width="3.5" height="1.7" fill="#e0b0a8" opacity="0.76"/><rect x="548" y="3" width="226" height="2.5" fill="#dca27c" opacity=".55"/><rect x="548" y="0" width="226" height="1.5" fill="#8a5638" opacity=".5"/></svg>
<div class="abs" style="left:115px;top:728px;width:59px;height:8px;background:#c4b0a0"></div>
<div class="abs" style="left:176px;top:728px;width:56px;height:8px;background:#bea898"></div>
<div class="abs" style="left:234px;top:728px;width:63px;height:8px;background:#d6c0bc"></div>
<div class="abs" style="left:300px;top:728px;width:60px;height:8px;background:#d8b8b6"></div>
<div class="abs" style="left:68px;top:731px;width:12px;height:10px;border-radius:50%;background:#d8e000"></div>
<div class="abs" style="left:83px;top:731px;width:10px;height:10px;border-radius:50%;background:#3cc0e8"></div>
<div class="abs" style="left:130px;top:731px;width:15px;height:10px;border-radius:50%;background:#dfe8f0"></div>
<div class="abs" style="left:258px;top:732px;width:24px;height:4px;background:#4a6ac8"></div>
<div class="abs" style="left:325px;top:732px;width:13px;height:6px;border-radius:40%;background:#58c0e0"></div>
</body>
</html>
